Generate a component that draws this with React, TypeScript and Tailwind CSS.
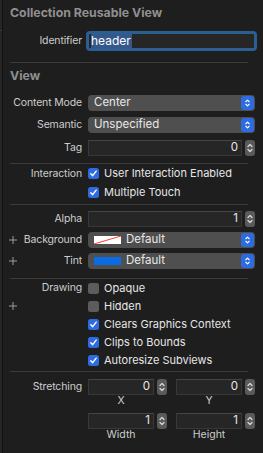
import React from "react";

function Chevrons({ className = "" }: { className?: string }) {
  return (
    <svg viewBox="0 0 8 12" className={className} fill="none" stroke="currentColor" strokeWidth="1.3" strokeLinecap="round" strokeLinejoin="round">
      <path d="M2 4.5 L4 2.5 L6 4.5" />
      <path d="M2 7.5 L4 9.5 L6 7.5" />
    </svg>
  );
}

function Plus() {
  return (
    <svg viewBox="0 0 8 8" className="h-[8px] w-[8px] text-[#9a9a9a]" stroke="currentColor" strokeWidth="1">
      <path d="M4 0 V8 M0 4 H8" />
    </svg>
  );
}

function Row({ label, plus, children, h = "h-[16px]" }: { label?: string; plus?: boolean; children: React.ReactNode; h?: string }) {
  return (
    <div className={`relative flex items-center ${h}`}>
      {plus && (
        <div className="absolute left-[9px] top-1/2 -translate-y-1/2">
          <Plus />
        </div>
      )}
      <div className="w-[82px] shrink-0 whitespace-nowrap text-right text-[10.5px] tracking-[-0.15px] text-[#cdcdcd]">{label}</div>
      <div className="ml-[6px] flex flex-1 items-center">{children}</div>
    </div>
  );
}

function Popup({ children }: { children: React.ReactNode }) {
  return (
    <div className="flex h-[16px] flex-1 items-center rounded-[4px] bg-[#4f4f4f] pl-[6px] pr-[1px] text-[11.5px] text-[#e8e8e8]">
      <div className="flex flex-1 items-center">{children}</div>
      <div className="flex h-[14px] w-[13px] items-center justify-center rounded-[3px] bg-[#2d6be0] text-white">
        <Chevrons className="h-[10px] w-[7px]" />
      </div>
    </div>
  );
}

function Stepper() {
  return (
    <div className="ml-[3px] flex h-[16px] w-[10px] shrink-0 items-center justify-center rounded-[3px] bg-[#5a5a5a] text-[#d6d6d6]">
      <Chevrons className="h-[12px] w-[8px]" />
    </div>
  );
}

function NumField({ value }: { value: string }) {
  return (
    <div className="flex flex-1 items-center">
      <div className="flex h-[16px] flex-1 items-center justify-end border border-[#383838] border-t-[#454545] bg-[#262626] pr-[3px] text-[11.5px] text-[#e8e8e8]">
        {value}
      </div>
      <Stepper />
    </div>
  );
}

function Check({ on, label }: { on: boolean; label: string }) {
  return (
    <div className="flex items-center">
      {on ? (
        <div className="flex h-[11px] w-[11px] items-center justify-center rounded-[2.5px] bg-[#2d6be0]">
          <svg viewBox="0 0 10 10" className="h-[9px] w-[9px]" fill="none" stroke="white" strokeWidth="1.6" strokeLinecap="round" strokeLinejoin="round">
            <path d="M2 5.3 L4.1 7.4 L8 2.4" />
          </svg>
        </div>
      ) : (
        <div className="h-[11px] w-[11px] rounded-[2.5px] bg-[#5c5c5c]" />
      )}
      <span className="ml-[5px] whitespace-nowrap text-[11px] text-[#e6e6e6]">{label}</span>
    </div>
  );
}

function Sep({ className = "" }: { className?: string }) {
  return <div className={`mx-[7px] h-px bg-[#3a3a3a] ${className}`} />;
}

function SubLabels({ a, b }: { a: string; b: string }) {
  return (
    <div className="flex h-[12px]">
      <div className="w-[88px] shrink-0" />
      <div className="grid flex-1 grid-cols-2 gap-[9px] text-[10.5px] leading-[12px] text-[#cdcdcd]">
        <div className="pr-[13px] text-center">{a}</div>
        <div className="pr-[13px] text-center">{b}</div>
      </div>
    </div>
  );
}

export default function App() {
  return (
    <div className="flex h-[453px] w-[263px] overflow-hidden bg-[#1e1e1e] font-[Inter,sans-serif]">
      <div className="relative w-[2px] shrink-0 bg-[#262626]">
        <div className="absolute left-0 top-[30px] h-px w-[2px] bg-[#3a3a3a]" />
      </div>
      <div className="w-px shrink-0 bg-[#111]" />
      <div className="flex flex-1 flex-col pr-[8px]">
        <div className="ml-[7px] mt-[4px] h-[18px] text-[12.3px] font-bold leading-[18px] text-[#8f8f8f]">Collection Reusable View</div>

        <div className="mt-[9px] flex h-[20px] items-center">
          <div className="w-[79px] shrink-0 text-right text-[10.5px] tracking-[-0.15px] text-[#cdcdcd]">Identifier</div>
          <div className="-mr-[2px] ml-[4px] flex h-[20px] flex-1 items-center rounded-[4px] border-[3px] border-[#2b5e92] bg-[#262626] pl-[2px]">
            <span className="bg-[#35588a] pr-[1px] text-[12px] leading-[14px] text-white">header</span>
          </div>
        </div>

        <Sep className="mt-[11px]" />

        <div className="ml-[7px] mt-[4px] h-[18px] text-[12.3px] font-bold leading-[18px] text-[#8f8f8f]">View</div>

        <div className="-ml-[3px] flex flex-col">
          <div className="mt-[10px]">
            <Row label="Content Mode"><Popup>Center</Popup></Row>
          </div>
          <div className="mt-[6px]">
            <Row label="Semantic"><Popup>Unspecified</Popup></Row>
          </div>
          <div className="mt-[7px]">
            <Row label="Tag"><NumField value="0" /></Row>
          </div>
        </div>

        <Sep className="mt-[7px]" />

        <div className="-ml-[3px] flex flex-col">
          <Row label="Interaction" h="h-[19px]"><Check on label="User Interaction Enabled" /></Row>
          <Row h="h-[19px]"><Check on label="Multiple Touch" /></Row>
        </div>

        <Sep className="mt-[2px]" />

        <div className="-ml-[3px] flex flex-col">
          <div className="mt-[6px]">
            <Row label="Alpha"><NumField value="1" /></Row>
          </div>
          <div className="mt-[5px]">
            <Row label="Background" plus>
              <Popup>
                <svg viewBox="0 0 27 8" className="h-[8px] w-[27px]" preserveAspectRatio="none">
                  <rect x="0" y="0" width="27" height="8" fill="white" />
                  <path d="M0 8 L27 0" stroke="#ff3b30" strokeWidth="1" />
                </svg>
                <span className="ml-[5px]">Default</span>
              </Popup>
            </Row>
          </div>
          <div className="mt-[5px]">
            <Row label="Tint" plus>
              <Popup>
                <div className="h-[8px] w-[27px] bg-[#0a6be3]" />
                <span className="ml-[5px]">Default</span>
              </Popup>
            </Row>
          </div>
        </div>

        <Sep className="mt-[9px]" />

        <div className="-ml-[3px] flex flex-col">
          <Row label="Drawing" h="h-[18px]"><Check on={false} label="Opaque" /></Row>
          <Row plus h="h-[18px]"><Check on={false} label="Hidden" /></Row>
          <Row h="h-[18px]"><Check on label="Clears Graphics Context" /></Row>
          <Row h="h-[18px]"><Check on label="Clips to Bounds" /></Row>
          <Row h="h-[18px]"><Check on label="Autoresize Subviews" /></Row>
        </div>

        <Sep className="mt-[2px]" />

        <div className="-ml-[3px] flex flex-col">
          <div className="mt-[7px]">
            <Row label="Stretching">
              <div className="grid flex-1 grid-cols-2 gap-[9px]">
                <NumField value="0" />
                <NumField value="0" />
              </div>
            </Row>
          </div>
          <SubLabels a="X" b="Y" />
          <div className="mt-[6px]">
            <Row>
              <div className="grid flex-1 grid-cols-2 gap-[9px]">
                <NumField value="1" />
                <NumField value="1" />
              </div>
            </Row>
          </div>
          <SubLabels a="Width" b="Height" />
        </div>
      </div>
    </div>
  );
}
